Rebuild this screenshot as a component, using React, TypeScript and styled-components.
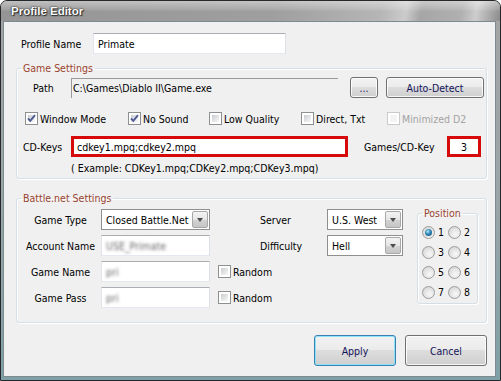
import React from "react";
import styled, { createGlobalStyle } from "styled-components";

const Global = createGlobalStyle`
  html, body { margin: 0; padding: 0; background: #ffffff; }
  body { width: 501px; height: 381px; overflow: hidden; }
  *, *::before, *::after { box-sizing: border-box; }
`;

const UI_FONT = `"DejaVu Sans Condensed", "Liberation Sans", Arial, sans-serif`;

const Window = styled.div`
  width: 501px;
  height: 381px;
  border: 1px solid #25292b;
  border-radius: 7px 7px 0 0;
  background: linear-gradient(to bottom, #a4a4a4 0%, #9ba5a8 50%, #7ea0a6 100%);
  display: flex;
  flex-direction: column;
  overflow: hidden;
  font-family: ${UI_FONT};
  font-size: 10.5px;
  color: #000;
`;

const TitleBar = styled.div`
  flex: none;
  height: 20px;
  display: flex;
  align-items: center;
  padding-left: 10px;
  background:
    linear-gradient(to bottom, rgba(255,255,255,0.4) 0px, rgba(255,255,255,0.1) 9px, rgba(0,0,0,0) 10px),
    linear-gradient(100deg, #959595 0%, #9f9f9f 55%, #b6b6b6 76%, #cbcbcb 81%, #a6a6a6 84%, #b0b0b0 92%, #cdcdcd 95%, #8c8c8c 100%);
`;

const Title = styled.span`
  font-family: "Liberation Sans", Arial, sans-serif;
  font-weight: bold;
  font-size: 11.5px;
  color: #fbfbfb;
  text-shadow: 0 0 2px #2a2a2a, 0 0 1px #2a2a2a, 1px 1px 1px #333;
`;

const Client = styled.div`
  flex: 1;
  margin: 0 4px 3px 2px;
  border: 1px solid #7d8b90;
  background: #f0f0f0;
  padding: 10px 8px 0 12px;
  display: flex;
  flex-direction: column;
`;

const Row = styled.div<{ $ml?: number; $mt?: number }>`
  display: flex;
  align-items: center;
  margin-left: ${(p) => p.$ml ?? 0}px;
  margin-top: ${(p) => p.$mt ?? 0}px;
`;

const Label = styled.span<{ $w?: number; $center?: boolean; $pl?: number }>`
  flex: none;
  width: ${(p) => (p.$w ? `${p.$w}px` : "auto")};
  padding-left: ${(p) => p.$pl ?? 0}px;
  text-align: ${(p) => (p.$center ? "center" : "left")};
  white-space: nowrap;
  color: #000;
`;

const TextBox = styled.div<{ $w: number }>`
  flex: none;
  width: ${(p) => p.$w}px;
  height: 21px;
  border: 1px solid;
  border-color: #abadb3 #dbdfe6 #e3e9ef #e2e3ea;
  background: #fff;
  display: flex;
  align-items: center;
  padding-left: 4px;
  white-space: nowrap;
  overflow: hidden;
`;

const Blurred = styled.span`
  color: transparent;
  text-shadow: 0 0 3px rgba(90, 90, 90, 0.9);
`;

const PathField = styled.div`
  flex: none;
  width: 267px;
  height: 20px;
  border-top: 1px solid #9a9a9a;
  border-left: 1px solid #9a9a9a;
  display: flex;
  align-items: center;
  padding-left: 1px;
  white-space: nowrap;
`;

const RedBox = styled.div<{ $w: number; $center?: boolean }>`
  flex: none;
  width: ${(p) => p.$w}px;
  height: 21px;
  border: 3px solid #d60a0a;
  background: #fff;
  display: flex;
  align-items: center;
  justify-content: ${(p) => (p.$center ? "center" : "flex-start")};
  padding-left: ${(p) => (p.$center ? 0 : 3)}px;
  white-space: nowrap;
`;

const Button = styled.button<{ $w: number; $h: number; $ml?: number; $default?: boolean }>`
  flex: none;
  width: ${(p) => p.$w}px;
  height: ${(p) => p.$h}px;
  margin-left: ${(p) => p.$ml ?? 0}px;
  padding: 0;
  font: inherit;
  color: #14145a;
  border: 1px solid ${(p) => (p.$default ? "#3c7fb1" : "#707070")};
  border-radius: 3px;
  background: linear-gradient(to bottom, #f2f2f2 0%, #ebebeb 49%, #dddddd 50%, #cfcfcf 100%);
  box-shadow: inset 0 0 0 1px ${(p) => (p.$default ? "#8ae3f9" : "rgba(255,255,255,0.85)")};
`;

const Group = styled.fieldset<{ $mt?: number; $pb?: number; $w?: number; $ml?: number }>`
  margin: ${(p) => p.$mt ?? 0}px 0 0 ${(p) => p.$ml ?? 0}px;
  padding: 0 0 ${(p) => p.$pb ?? 0}px 0;
  border: 1px solid #d5dfe5;
  border-radius: 3px;
  box-shadow: inset 1px 1px 0 #ffffff, 1px 1px 0 #ffffff;
  min-width: 0;
  ${(p) => (p.$w ? `width: ${p.$w}px; flex: none;` : "")}
`;

const Legend = styled.legend`
  padding: 0 2px;
  margin-left: 4px;
  color: #99432f;
  line-height: 13px;
`;

const CheckRow = styled.div`
  display: flex;
  align-items: center;
  height: 17px;
  margin-top: 12px;
  padding-left: 8px;
`;

const Check = styled.label<{ $w?: number; $disabled?: boolean; $ml?: number }>`
  flex: none;
  display: flex;
  align-items: center;
  gap: 2px;
  width: ${(p) => (p.$w ? `${p.$w}px` : "auto")};
  margin-left: ${(p) => p.$ml ?? 0}px;
  color: ${(p) => (p.$disabled ? "#a3a3a3" : "#000")};
  white-space: nowrap;
`;

const Box = styled.span<{ $disabled?: boolean }>`
  position: relative;
  flex: none;
  width: 13px;
  height: 13px;
  border: 1px solid ${(p) => (p.$disabled ? "#cacaca" : "#8e8f8f")};
  background: #fff;
  padding: 2px;
  display: flex;
  &::before {
    content: "";
    flex: 1;
    background: ${(p) =>
      p.$disabled ? "#f4f4f4" : "linear-gradient(135deg, #c9ccd1 0%, #e6e7e9 60%, #f7f7f7 100%)"};
  }
  svg {
    position: absolute;
    left: 0;
    top: 0;
  }
`;

const CheckMark = () => (
  <svg width="11" height="11" viewBox="0 0 11 11">
    <path d="M2 5.3 L4.3 7.8 L9 2.2" fill="none" stroke="#4d5b92" strokeWidth="1.9" />
  </svg>
);

const Checkbox = ({ label, checked, disabled, w, ml }: { label: string; checked?: boolean; disabled?: boolean; w?: number; ml?: number }) => (
  <Check $w={w} $disabled={disabled} $ml={ml}>
    <Box $disabled={disabled}>{checked && <CheckMark />}</Box>
    {label}
  </Check>
);

const Example = styled.div`
  margin: 5px 0 0 54px;
  line-height: 13px;
  white-space: nowrap;
`;

const BattleBody = styled.div`
  display: flex;
  align-items: flex-start;
  margin-top: 4px;
  padding-left: 3px;
`;

const FieldGrid = styled.div<{ $cols: string; $w: number }>`
  flex: none;
  width: ${(p) => p.$w}px;
  display: grid;
  grid-template-columns: ${(p) => p.$cols};
  grid-auto-rows: 21px;
  row-gap: 5px;
  align-items: center;
`;

const Combo = styled.div<{ $w: number }>`
  width: ${(p) => p.$w}px;
  height: 21px;
  border: 1px solid #8e8f8f;
  background: #fff;
  display: flex;
  padding: 1px;
`;

const ComboText = styled.span`
  flex: 1;
  display: flex;
  align-items: center;
  padding-left: 3px;
  white-space: nowrap;
  overflow: hidden;
`;

const ComboBtn = styled.span`
  flex: none;
  width: 16px;
  border: 1px solid #a8a8a8;
  border-radius: 2px;
  background: linear-gradient(to bottom, #f3f3f3 0%, #e6e6e6 50%, #d3d3d3 51%, #c6c6c6 100%);
  display: flex;
  align-items: center;
  justify-content: center;
  &::after {
    content: "";
    border-left: 3.5px solid transparent;
    border-right: 3.5px solid transparent;
    border-top: 4px solid #4e4e4e;
  }
`;

const ComboBox = ({ w, value }: { w: number; value: string }) => (
  <Combo $w={w}>
    <ComboText>{value}</ComboText>
    <ComboBtn />
  </Combo>
);

const RadioGrid = styled.div`
  display: grid;
  grid-template-columns: 26px 26px;
  grid-auto-rows: 20px;
  padding-left: 4px;
  margin-top: 2px;
  align-items: center;
`;

const Radio = styled.label`
  display: flex;
  align-items: center;
  gap: 3px;
`;

const RadioCircle = styled.span<{ $on?: boolean }>`
  flex: none;
  width: 13px;
  height: 13px;
  border-radius: 50%;
  border: 1px solid #9c9c9c;
  background: radial-gradient(circle at 60% 65%, #f8f8f8 0%, #e2e2e2 55%, #cfcfcf 100%);
  display: flex;
  align-items: center;
  justify-content: center;
  &::after {
    content: "";
    display: ${(p) => (p.$on ? "block" : "none")};
    width: 7px;
    height: 7px;
    border-radius: 50%;
    background: radial-gradient(circle at 40% 35%, #a9e8fa 0%, #2d84b4 45%, #0e4a76 100%);
  }
`;

const ButtonRow = styled.div`
  display: flex;
  justify-content: flex-end;
  gap: 9px;
  margin-top: 12px;
`;

export default function App() {
  return (
    <>
      <Global />
      <Window>
        <TitleBar>
          <Title>Profile Editor</Title>
        </TitleBar>
        <Client>
          <Row $ml={5} $mt={1}>
            <Label $w={72}>Profile Name</Label>
            <TextBox $w={193}>Primate</TextBox>
          </Row>

          <Group $mt={8} $pb={3}>
            <Legend>Game Settings</Legend>
            <Row $ml={16} $mt={2}>
              <Label $w={38}>Path</Label>
              <PathField>{"C:\\Games\\Diablo II\\Game.exe"}</PathField>
              <Button $w={28} $h={21} $ml={12}>...</Button>
              <Button $w={98} $h={21} $ml={8}>Auto-Detect</Button>
            </Row>
            <CheckRow>
              <Checkbox w={103} checked label="Window Mode" />
              <Checkbox w={81} checked label="No Sound" />
              <Checkbox w={92} label="Low Quality" />
              <Checkbox w={86} label="Direct, Txt" />
              <Checkbox disabled label="Minimized D2" />
            </CheckRow>
            <Row $ml={6} $mt={9}>
              <Label $w={48}>CD-Keys</Label>
              <RedBox $w={277}>cdkey1.mpq;cdkey2.mpq</RedBox>
              <Label $w={99} $pl={16}>Games/CD-Key</Label>
              <RedBox $w={34} $center>3</RedBox>
            </Row>
            <Example>( Example: CDKey1.mpq;CDKey2.mpq;CDKey3.mpq)</Example>
          </Group>

          <Group $mt={13} $pb={14}>
            <Legend>Battle.net Settings</Legend>
            <BattleBody>
              <FieldGrid $w={240} $cols="81px 109px 1fr">
                <Label $center>Game Type</Label>
                <ComboBox w={109} value="Closed Battle.Net" />
                <span />
                <Label $center>Account Name</Label>
                <TextBox $w={109}><Blurred>USE_Primate</Blurred></TextBox>
                <span />
                <Label $center>Game Name</Label>
                <TextBox $w={109}><Blurred>pri</Blurred></TextBox>
                <Checkbox ml={8} label="Random" />
                <Label $center>Game Pass</Label>
                <TextBox $w={109}><Blurred>pri</Blurred></TextBox>
                <Checkbox ml={8} label="Random" />
              </FieldGrid>
              <FieldGrid $w={143} $cols="67px 76px">
                <Label>Server</Label>
                <ComboBox w={76} value="U.S. West" />
                <Label>Difficulty</Label>
                <ComboBox w={76} value="Hell" />
              </FieldGrid>
              <Group $w={61} $pb={1} $ml={14} $mt={-2}>
                <Legend>Position</Legend>
                <RadioGrid>
                  {[1, 2, 3, 4, 5, 6, 7, 8].map((n) => (
                    <Radio key={n}>
                      <RadioCircle $on={n === 1} />
                      {n}
                    </Radio>
                  ))}
                </RadioGrid>
              </Group>
            </BattleBody>
          </Group>

          <ButtonRow>
            <Button $w={82} $h={31} $default>Apply</Button>
            <Button $w={82} $h={31}>Cancel</Button>
          </ButtonRow>
        </Client>
      </Window>
    </>
  );
}
